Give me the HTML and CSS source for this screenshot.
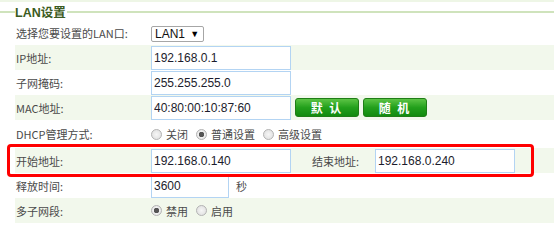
FILE: index.html
```html
<!DOCTYPE html>
<html lang="zh-CN">
<head>
    <meta charset="UTF-8">
    <meta name="viewport" content="width=device-width, initial-scale=1.0">
    <link rel="stylesheet" href="styles.css">
</head>
<body>
    <div class="top-strip"></div>
    <div class="legend-bar">
        <span class="legend-line short"></span>
        <span class="legend-text">LAN设置</span>
        <span class="legend-line"></span>
    </div>

    <table class="lan-table">
        <tr class="row-lan">
            <td class="label">选择您要设置的LAN口:</td>
            <td><span class="fake-select">LAN1 <span class="arrow">▼</span></span></td>
        </tr>
        <tr class="alt">
            <td class="label">IP地址:</td>
            <td><input type="text" class="field" value="192.168.0.1"></td>
        </tr>
        <tr>
            <td class="label">子网掩码:</td>
            <td><input type="text" class="field" value="255.255.255.0"></td>
        </tr>
        <tr class="alt">
            <td class="label">MAC地址:</td>
            <td class="inline">
                <input type="text" class="field" value="40:80:00:10:87:60">
                <button class="green-btn">默 认</button>
                <button class="green-btn">随 机</button>
            </td>
        </tr>
        <tr class="row-dhcp">
            <td class="label">DHCP管理方式:</td>
            <td class="inline">
                <label class="opt"><input type="radio" name="dhcp"> 关闭</label>
                <label class="opt"><input type="radio" name="dhcp" checked> 普通设置</label>
                <label class="opt"><input type="radio" name="dhcp"> 高级设置</label>
            </td>
        </tr>
        <tr class="alt">
            <td class="label">开始地址:</td>
            <td class="inline">
                <input type="text" class="field" value="192.168.0.140">
                <span class="sub-label">结束地址:</span>
                <input type="text" class="field" value="192.168.0.240">
            </td>
        </tr>
        <tr>
            <td class="label">释放时间:</td>
            <td class="inline">
                <input type="text" class="field short" value="3600">
                <span class="unit">秒</span>
            </td>
        </tr>
        <tr class="alt">
            <td class="label">多子网段:</td>
            <td class="inline">
                <label class="opt"><input type="radio" name="multi" checked> 禁用</label>
                <label class="opt"><input type="radio" name="multi"> 启用</label>
            </td>
        </tr>
    </table>

    <!-- annotation box round the address range row -->
    <div class="highlight"></div>
</body>
</html>
```

FILE: styles.css
```css
body {
    margin: 0;
    background-color: white;
    font-family: "Liberation Sans", "Noto Sans CJK SC", sans-serif;
    position: relative;
    width: 554px;
    height: 240px;
    overflow: hidden;
}

.top-strip {
    height: 2px;
    background-color: #eef6e6;
}

.legend-bar {
    display: flex;
    align-items: center;
    height: 19px;
}

.legend-line {
    flex: 1;
    height: 2px;
    background-color: #cfe3bc;
}

.legend-line.short {
    flex: none;
    width: 15px;
}

.legend-text {
    font-size: 12.5px;
    font-weight: bold;
    color: #3b5b22;
    padding: 0 1px 0 0;
}

.lan-table {
    margin-left: 15px;
    width: 539px;
    border-collapse: collapse;
    table-layout: fixed;
}

.lan-table td {
    padding: 0;
    height: 25px;
    vertical-align: middle;
}

.lan-table .row-lan td {
    height: 24px;
}

.lan-table .row-dhcp td {
    height: 28px;
}

.lan-table .alt td {
    background-color: #f2f8ec;
}

.label {
    width: 135px;
    padding-left: 1px !important;
    font-size: 11px;
    color: #4a4a4a;
    font-family: "Noto Sans CJK SC", "Liberation Sans", sans-serif;
}

.inline {
    display: flex;
    align-items: center;
}

.fake-select {
    display: inline-block;
    padding: 0 4px 0 3px;
    height: 14px;
    line-height: 14px;
    border: 1px solid #a6a6a6;
    border-radius: 2px;
    font-size: 12px;
    color: #111;
}

.fake-select .arrow {
    font-size: 9px;
    color: #000;
    vertical-align: 1px;
    margin-left: 2px;
}

.field {
    box-sizing: border-box;
    width: 140px;
    height: 24px;
    margin: 0;
    padding: 0 2px;
    border: 1px solid #b3d4f3;
    background-color: white;
    font-family: "Liberation Sans", sans-serif;
    font-size: 12px;
    color: #1c1c2c;
    outline: none;
}

.field.short {
    width: 78px;
}

.unit {
    margin-left: 7px;
    font-size: 11px;
    color: #4a4a4a;
    font-family: "Noto Sans CJK SC", sans-serif;
}

.sub-label {
    margin-left: 21px;
    width: 63px;
    font-size: 11px;
    color: #4a4a4a;
    font-family: "Noto Sans CJK SC", sans-serif;
}

.green-btn {
    box-sizing: border-box;
    width: 64px;
    height: 19px;
    margin-left: 4px;
    padding: 0;
    border: 1px solid #1f7d16;
    border-radius: 3px;
    background: linear-gradient(#5cc445, #23a01c 50%, #128a0f);
    color: white;
    font-weight: bold;
    font-size: 12px;
    letter-spacing: 2px;
    font-family: "Noto Sans CJK SC", sans-serif;
}

.green-btn + .green-btn {
    margin-left: 4px;
}

.opt {
    display: flex;
    align-items: center;
    margin-right: 8px;
    font-size: 11px;
    color: #4a4a4a;
    font-family: "Noto Sans CJK SC", sans-serif;
}

.opt input {
    appearance: none;
    -webkit-appearance: none;
    box-sizing: border-box;
    width: 11px;
    height: 11px;
    margin: 0 4px 0 0;
    border: 1px solid #b4b4b4;
    border-radius: 50%;
    background: radial-gradient(circle, #f6f6f6, #dcdcdc);
}

.opt input:checked {
    background: radial-gradient(circle, #555 0 2.5px, #f0f0f0 3px, #dcdcdc);
}

.highlight {
    position: absolute;
    left: 7px;
    top: 144px;
    width: 527px;
    height: 33px;
    box-sizing: border-box;
    border: 3px solid #ff0000;
    border-radius: 4px;
}
```
